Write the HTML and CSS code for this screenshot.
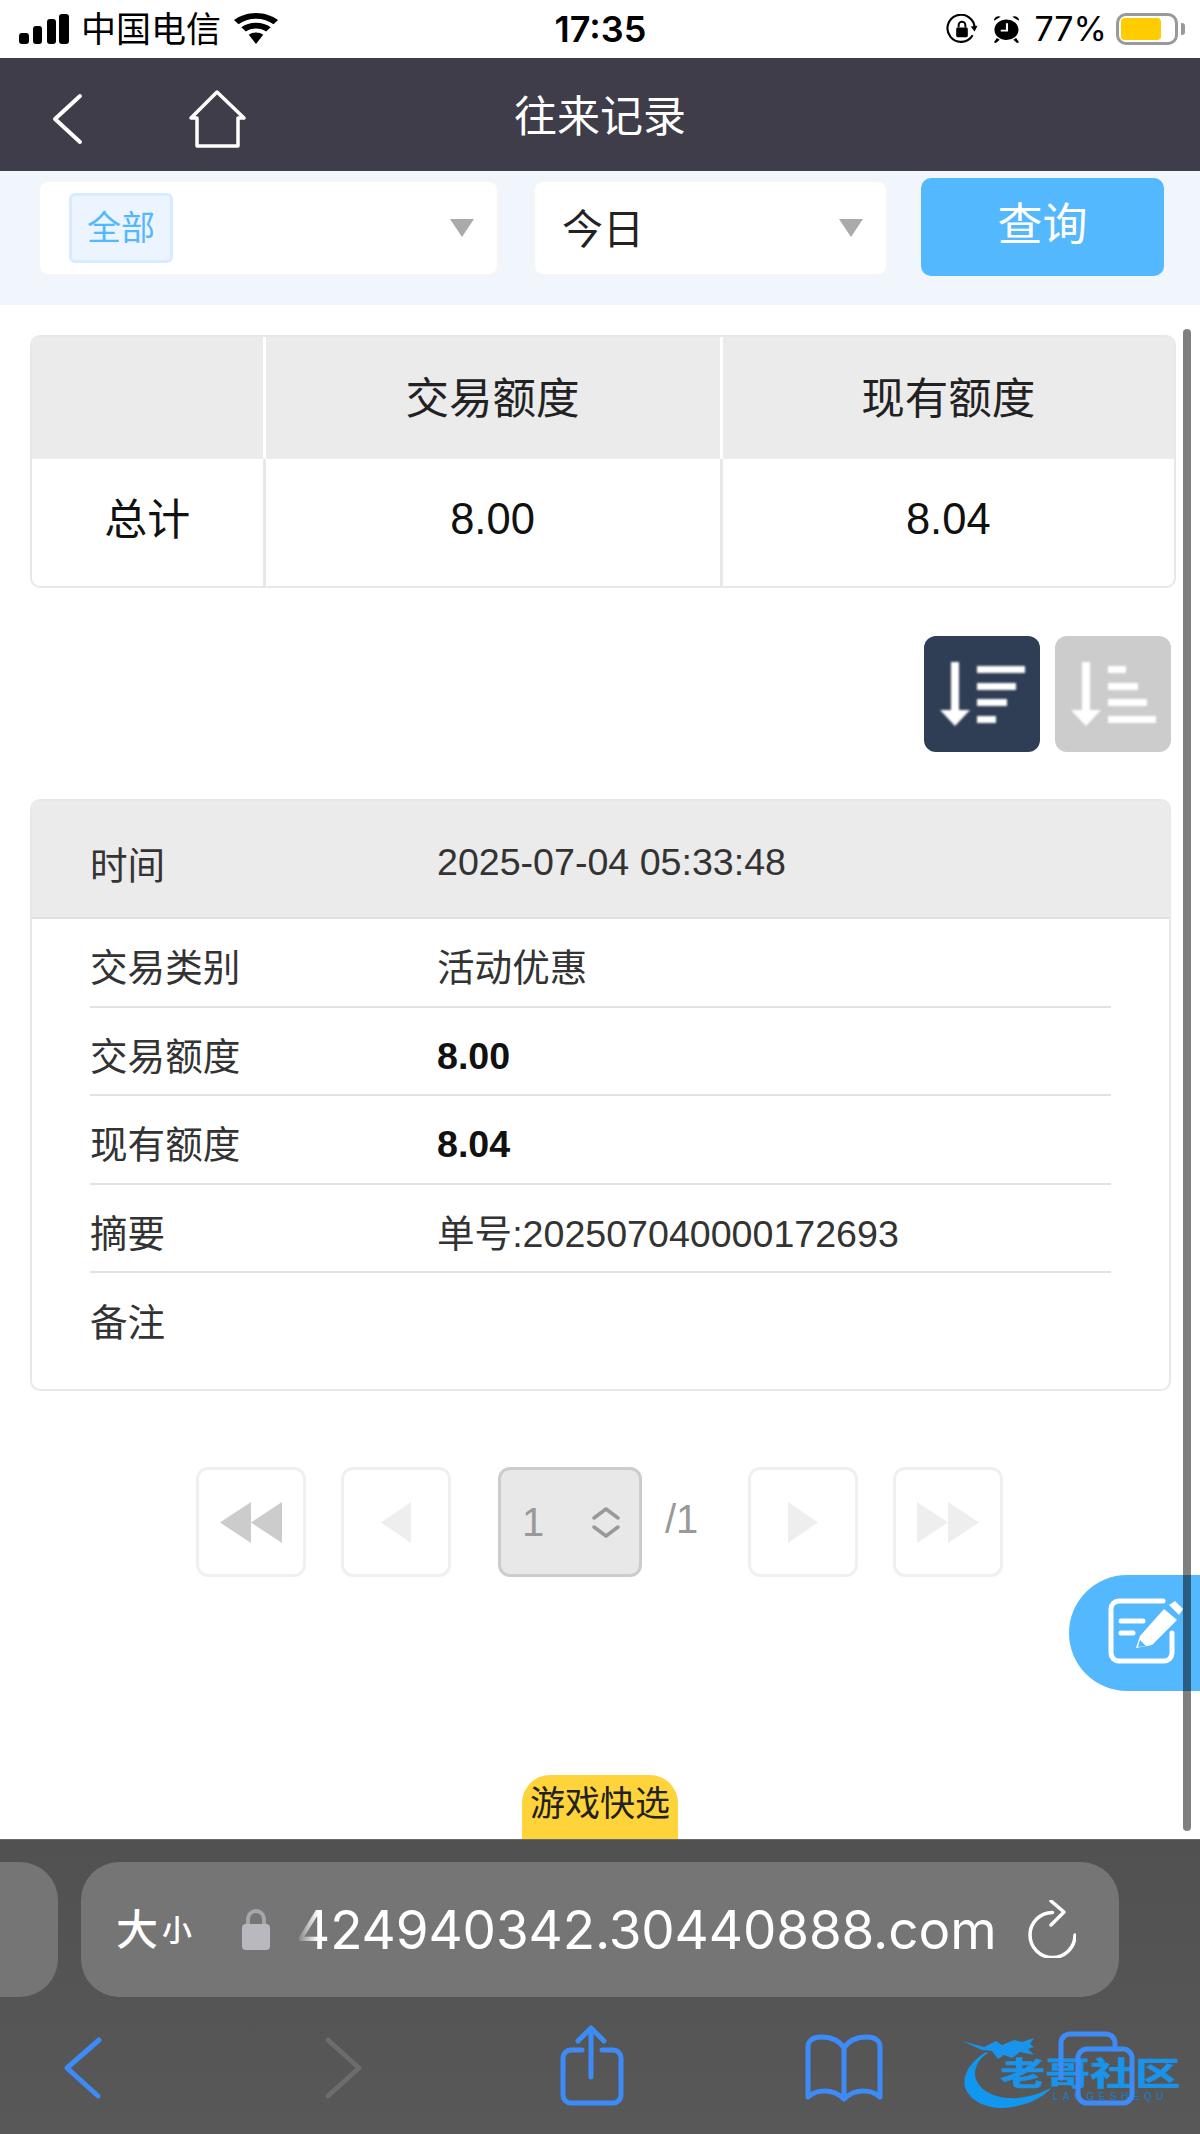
FILE: index.html
```html
<!DOCTYPE html>
<html lang="zh-CN">
<head>
<meta charset="utf-8">
<title>往来记录</title>
<link rel="stylesheet" href="styles.css">
</head>
<body>
<div class="page">
	<div class="statusBar">
		<div class="statusLeft">
			<svg class="signal" width="50" height="30" viewBox="0 0 50 30"><rect x="0" y="19" width="10" height="11" rx="3"/><rect x="14" y="12" width="9" height="18" rx="3"/><rect x="28" y="5" width="9" height="25" rx="3"/><rect x="40" y="0" width="10" height="30" rx="3"/></svg>
			<span class="carrier">中国电信</span>
			<svg class="wifi" width="44" height="31" viewBox="0 0 44 38" preserveAspectRatio="none"><path d="M22 0C13.500 0 6 3.400 0 8.500l4.500 5.200C9.300 9.500 15.300 7 22 7s12.700 2.500 17.500 6.700L44 8.500C38 3.400 30.500 0 22 0z"/><path d="M22 12c-5.700 0-10.700 2.100-14.700 5.500l4.600 5.300c2.700-2.300 6.200-3.800 10.100-3.800s7.400 1.500 10.100 3.800l4.600-5.300C32.700 14.100 27.700 12 22 12z"/><path d="M22 24c-2.800 0-5.200 1-7.200 2.600L22 38l7.200-11.400C27.200 25 24.800 24 22 24z"/></svg>
		</div>
		<div class="statusTime">17:35</div>
		<div class="statusRight">
			<svg class="rotLock" width="34" height="31" viewBox="0 0 32 32"><path d="M27 22a14 14 0 1 1 2-7" fill="none" stroke="#000" stroke-width="2.200"/><path d="M32 12l-3 6-4-5z"/><rect x="10" y="14" width="12" height="10" rx="1.500"/><path d="M12.500 14v-2.500a3.500 3.500 0 0 1 7 0V14" fill="none" stroke="#000" stroke-width="2"/></svg>
			<svg class="alarm" width="27" height="28" viewBox="0 0 28 34" preserveAspectRatio="none"><circle cx="14" cy="18" r="12.500"/><path d="M1 7a5 5 0 0 1 7-5zM27 7a5 5 0 0 0-7-5zM4 28l-3 5 2 1 4-4zM24 28l3 5-2 1-4-4z"/><path d="M14.500 10v9H8" fill="none" stroke="#fff" stroke-width="2.200"/></svg>
			<span class="percent">77%</span>
			<div class="battery"><div class="batteryFill"></div></div>
			<div class="batteryNub"></div>
		</div>
	</div>

	<div class="head">
		<div class="headLeft">
			<svg class="headBack" width="36" height="52" viewBox="0 0 36 52"><path d="M30 3L5 26l25 23" fill="none" stroke="#fff" stroke-width="4" stroke-linecap="round" stroke-linejoin="round"/></svg>
			<svg class="headHome" width="62" height="60" viewBox="0 0 62 60"><path d="M4 29L30 3l27 26h-6v28H10V29z" fill="none" stroke="#fff" stroke-width="3.500" stroke-linejoin="round"/></svg>
		</div>
		<div class="headTitle">往来记录</div>
		<div></div>
	</div>

	<div class="filter">
		<div class="selectBox selectType">
			<span class="tag">全部</span>
			<i class="caret"></i>
		</div>
		<div class="selectBox selectDate">
			<span class="selectText">今日</span>
			<i class="caret"></i>
		</div>
		<div class="searchBtn">查询</div>
	</div>

	<div class="main">
		<div class="total">
			<table>
				<tr>
					<th class="colName"></th>
					<th class="colMid">交易额度</th>
					<th>现有额度</th>
				</tr>
				<tr>
					<td class="colName totalName">总计</td>
					<td class="colMid">8.00</td>
					<td>8.04</td>
				</tr>
			</table>
		</div>

		<div class="sortBar">
			<div class="sortBtn sortOn">
				<svg width="116" height="116" viewBox="0 0 116 116"><path d="M27 26h8v48h11L31 90 16 74h11z"/><rect x="53" y="30" width="48" height="7"/><rect x="53" y="47" width="39" height="7"/><rect x="53" y="63" width="30" height="7"/><rect x="53" y="80" width="19" height="7"/></svg>
			</div>
			<div class="sortBtn sortOff">
				<svg width="116" height="116" viewBox="0 0 116 116"><path d="M27 26h8v48h11L31 90 16 74h11z"/><rect x="53" y="30" width="18" height="7"/><rect x="53" y="47" width="30" height="7"/><rect x="53" y="63" width="39" height="7"/><rect x="53" y="80" width="48" height="7"/></svg>
			</div>
		</div>

		<div class="record">
			<div class="recordHead">
				<span class="rowName">时间</span>
				<span class="rowVal">2025-07-04 05:33:48</span>
			</div>
			<div class="recordBody">
				<div class="row"><span class="rowName">交易类别</span><span class="rowVal">活动优惠</span></div>
				<div class="row"><span class="rowName">交易额度</span><span class="rowVal rowBold">8.00</span></div>
				<div class="row"><span class="rowName">现有额度</span><span class="rowVal rowBold">8.04</span></div>
				<div class="row"><span class="rowName">摘要</span><span class="rowVal">单号:202507040000172693</span></div>
				<div class="row rowLast"><span class="rowName">备注</span><span class="rowVal"></span></div>
			</div>
		</div>

		<div class="pager">
			<div class="pageBtn">
				<svg width="62" height="41" viewBox="0 0 62 41"><path d="M31 0v41L0 20.500zM62 0v41L31 20.500z" fill="#ccc"/></svg>
			</div>
			<div class="pageBtn pagePrev">
				<svg width="30" height="41" viewBox="0 0 30 41"><path d="M30 0v41L0 20.500z" fill="#eee"/></svg>
			</div>
			<div class="pageSelect">
				<span>1</span>
				<svg width="28" height="31" viewBox="0 0 28 31"><path d="M2 11L14 2l12 9M2 20l12 9 12-9" fill="none" stroke="#999" stroke-width="3.500" stroke-linecap="round" stroke-linejoin="round"/></svg>
			</div>
			<div class="pageTotal">/1</div>
			<div class="pageBtn pageNext">
				<svg width="30" height="41" viewBox="0 0 30 41"><path d="M0 0v41l30-20.500z" fill="#eee"/></svg>
			</div>
			<div class="pageBtn">
				<svg width="62" height="41" viewBox="0 0 62 41"><path d="M0 0v41l31-20.500zM31 0v41l31-20.500z" fill="#eee"/></svg>
			</div>
		</div>

		<div class="quickTab">游戏快选</div>
		<div class="floatBtn">
			<svg width="80" height="80" viewBox="0 0 80 80">
				<path d="M58 8H14a8 8 0 0 0-8 8v44a8 8 0 0 0 8 8h45a8 8 0 0 0 8-8V40" fill="none" stroke="#fff" stroke-width="5" stroke-linecap="round"/>
				<path d="M16 28h22M16 40h12" fill="none" stroke="#fff" stroke-width="5" stroke-linecap="round"/>
				<path d="M35 43L59 16l13 11-25 25-16 3z" fill="#fff"/>
				<path d="M64 12l6-4 8 8-4 6z" fill="#fff"/>
				<path d="M35 47l6 6-8 1z" fill="#54b8ff"/>
			</svg>
		</div>
	</div>

	<div class="chrome">
		<div class="urlRow">
			<div class="tabStub"></div>
			<div class="urlBar">
				<span class="fontSize"><b>大</b><small>小</small></span>
				<svg class="urlLock" width="28" height="41" viewBox="0 0 28 41"><path d="M6 16v-6a8 8 0 0 1 16 0v6" fill="none" stroke="#a5a5ab" stroke-width="4"/><rect x="0" y="15" width="28" height="26" rx="4" fill="#b8b8be"/></svg>
				<span class="urlText">424940342.30440888.com</span>
				<svg class="urlReload" width="48" height="58" viewBox="0 0 48 58"><path d="M47 35A22.500 22.500 0 1 1 24.500 12.500" fill="none" stroke="#fff" stroke-width="3.500" stroke-linecap="round"/><path d="M23 1l13 11-13 13" fill="none" stroke="#fff" stroke-width="3.500" stroke-linecap="round" stroke-linejoin="round"/></svg>
			</div>
		</div>
		<div class="toolBar">
			<svg width="100" height="100" viewBox="0 0 100 100"><path d="M59 18L27 46l31 28" class="toolLine"/></svg>
			<svg width="100" height="100" viewBox="0 0 100 100"><path d="M35 18l31 28-31 28" class="toolLine toolOff"/></svg>
			<svg width="100" height="100" viewBox="0 0 100 100"><path d="M36 28H25a8 8 0 0 0-8 8v37a8 8 0 0 0 8 8h42a8 8 0 0 0 8-8V36a8 8 0 0 0-8-8H56M45 55V6M32 19L45 6l13 13" class="toolLine"/></svg>
			<svg width="100" height="100" viewBox="0 0 100 100"><path d="M45 26c-5-8-13-11-23-11-8 0-13 4-13 10v50c4-4 10-6 17-6 8 0 14 3 19 8 5-5 11-8 19-8 7 0 13 2 17 6V25c0-6-5-10-13-10-10 0-18 3-23 11zM45 26v48" class="toolLine"/></svg>
			<svg class="toolTabs" width="100" height="100" viewBox="0 0 100 100"><path d="M9 56V21a9 9 0 0 1 9-9h36a9 9 0 0 1 9 9v6" class="toolLine"/><rect x="26" y="27" width="54" height="54" rx="9" class="toolLine"/></svg>
			<div class="watermark">
				<svg class="mark" width="100" height="74" viewBox="0 0 100 74"><path d="M24 15C8 25 0 38 3 50c5 16 27 24 47 20 18-3 32-10 40-20-12 7-27 12-44 11C26 60 12 48 13 35c1-8 6-15 13-19z" fill="#1297ee"/><path d="M0 4l22 6 12-6 6 4 12-5 8 2 12-4-4 6 4 3-6 2 6 6-14-3-8 6-8-3-6 4-6-8-10-1z" fill="#1a93ea"/></svg>
				<span class="markName">老哥社区</span>
				<span class="markSub">LAOGESHEQU</span>
			</div>
		</div>
	</div>

	<div class="scrollBar"></div>
</div>
</body>
</html>
```

FILE: styles.css
```css
*{ padding:0; margin:0; box-sizing:border-box; }
body{ font-family:"Liberation Sans","Noto Sans CJK SC",sans-serif; background:#fff; color:#222; }
.page{ position:relative; width:1200px; height:2134px; display:flex; flex-direction:column; overflow:hidden; }

/* status bar */
.statusBar{ height:58px; display:grid; grid-template-columns:1fr auto 1fr; align-items:center; padding:0 15px 0 19px; background:#fff; color:#000; font-family:"Inter","Noto Sans CJK SC",sans-serif; }
.statusLeft{ display:flex; align-items:center; }
.carrier{ font-size:35px; line-height:58px; margin-left:12px; }
.wifi{ margin-left:13px; margin-top:-1px; }
.statusTime{ font-size:36px; font-weight:600; line-height:58px; margin-left:-3px; }
.statusRight{ display:flex; align-items:center; justify-content:flex-end; }
.rotLock{ margin-right:14px; }
.alarm{ margin-right:14px; }
.percent{ font-size:34px; line-height:58px; margin-right:9px; }
.battery{ width:62px; height:32px; border:3px solid #999; border-radius:10px; padding:2px; }
.batteryFill{ width:40px; height:22px; background:#fc0; border-radius:4px; }
.batteryNub{ width:4px; height:12px; margin-left:3px; background:#999; border-radius:0 3px 3px 0; }

/* page head */
.head{ height:113px; background:#3e3d49; display:grid; grid-template-columns:1fr auto 1fr; align-items:center; color:#fff; }
.headLeft{ display:flex; align-items:center; padding-left:50px; }
.headBack{ margin-top:5px; }
.headHome{ margin:6px 0 0 101px; }
.headTitle{ font-size:43px; line-height:113px; padding-top:3px; }

/* filter */
.filter{ height:134px; background:#f1f6fd; display:flex; align-items:flex-start; padding:7px 0 0 38px; }
.selectBox{ height:96px; margin-top:2px; background:#fff; border:2px solid #f5f5f5; border-radius:10px; display:flex; align-items:center; justify-content:space-between; padding-right:23px; }
.selectType{ width:461px; padding-left:29px; }
.selectDate{ width:355px; margin-left:34px; padding-left:27px; }
.tag{ width:104px; height:70px; line-height:65px; text-align:center; font-size:34px; color:#54b8ff; background:#ecf4ff; border:3px solid #d9ebff; border-radius:6px; }
.selectText{ font-size:41px; padding-bottom:5px; }
.caret{ width:0; height:0; border-left:12px solid transparent; border-right:12px solid transparent; border-top:18px solid #aaa; }
.searchBtn{ width:243px; height:98px; margin-left:33px; background:#54b8ff; border-radius:10px; color:#fff; font-size:45px; line-height:96px; text-align:center; }

/* main */
.main{ position:relative; flex:1; padding-top:30px; background:#fff; }
.total{ width:1146px; height:253px; margin-left:30px; border:2px solid #e8e8e8; border-radius:10px; overflow:hidden; }
.total table{ width:100%; height:100%; border-collapse:collapse; table-layout:fixed; }
.total th{ height:122px; padding-bottom:6px; background:#ebebeb; font-weight:normal; font-size:43.500px; }
.total td{ padding-bottom:6px; text-align:center; font-size:43.500px; color:#111; }
.colName{ width:232px; border-right:3px solid #e8e8e8; }
.colMid{ width:457px; border-right:3px solid #e8e8e8; }
.total th.colName,.total th.colMid{ border-right-color:#fff; }
.total td.totalName{ font-size:43px; padding-bottom:14px; }

.sortBar{ display:flex; justify-content:flex-end; gap:15px; margin-top:48px; padding-right:29px; }
.sortBtn{ width:116px; height:116px; border-radius:12px; }
.sortBtn svg{ display:block; fill:#fff; filter:blur(.8px); }
.sortOn{ background:#2f3e55; }
.sortOff{ background:#ccc; }

.record{ width:1141px; height:592px; margin:47px 0 0 30px; border:2px solid #e8e8e8; border-radius:10px; overflow:hidden; }
.recordHead{ height:118px; background:#ebebeb; border-bottom:2px solid #e0e0e0; display:flex; align-items:center; padding:6px 0 0 58px; }
.recordBody{ padding:0 58px 0 58px; }
.row{ height:88.500px; display:flex; align-items:center; padding-top:5px; border-bottom:2px solid #e2e2e2; }
.rowLast{ border-bottom:0; }
.rowName{ width:347px; font-size:37.600px; color:#333; }
.rowVal{ font-size:37.600px; color:#333; }
.rowBold{ font-weight:bold; color:#111; padding-top:6px; }

.pager{ display:flex; align-items:flex-start; margin-top:76px; padding-left:196px; }
.pageBtn{ width:110px; height:110px; border:3px solid #f0f0f0; border-radius:12px; display:flex; align-items:center; justify-content:center; }
.pageBtn svg{ filter:blur(.6px); }
.pageBtn + .pageBtn{ margin-left:35px; }
.pageSelect{ width:144px; height:110px; margin-left:47px; background:#e8e8e8; border:3px solid #ccc; border-radius:12px; display:flex; align-items:center; justify-content:space-between; padding:0 19px 0 21px; font-size:40px; color:#999; }
.pageTotal{ width:106px; padding:32px 0 0 23px; font-size:40px; line-height:40px; color:#999; }
.pageBtn.pageNext{ margin-left:0; }
.pagePrev{ padding-left:0; }

.quickTab{ position:absolute; left:522px; bottom:0; width:156px; height:64px; background:#ffd43a; border-radius:28px 28px 0 0; font-size:35px; line-height:58px; text-align:center; color:#222; }
.floatBtn{ position:absolute; right:0; top:1270px; width:131px; height:116px; background:#54b8ff; border-radius:58px 0 0 58px; padding:18px 0 0 36px; }
.floatBtn svg{ display:block; }

/* browser chrome */
.chrome{ height:295px; background:linear-gradient(180deg,#515151,#585858); border-top:1px solid #6a6a6a; }
.urlRow{ display:flex; gap:23px; padding-top:22px; height:182px; }
.tabStub{ width:58px; height:135px; background:#757575; border-radius:0 38px 38px 0; }
.urlBar{ width:1038px; height:135px; background:#757575; border-radius:38px; display:flex; align-items:center; padding:0 43px 0 35px; color:#fff; font-family:"Inter","Noto Sans CJK SC",sans-serif; }
.fontSize{ width:126px; display:flex; align-items:flex-end; font-size:42px; line-height:46px; }
.fontSize b{ font-weight:500; }
.fontSize small{ font-size:30px; font-weight:500; margin-left:4px; }
.urlText{ margin-left:26px; font-size:53px; letter-spacing:-.1px; color:#fff; white-space:nowrap; -webkit-mask-image:linear-gradient(90deg,transparent,#000 22px); mask-image:linear-gradient(90deg,transparent,#000 22px); }
.urlReload{ margin-left:auto; margin-top:-1px; }

.toolBar{ position:relative; display:flex; gap:153px; padding-left:40px; }
.toolBar svg{ display:block; flex:none; }
.toolLine{ fill:none; stroke:#3d8bf7; stroke-width:5; stroke-linecap:round; stroke-linejoin:round; }
.toolOff{ stroke:#6c6c6c; }
.toolTabs{ position:relative; z-index:1; }

.watermark{ position:absolute; left:962px; top:0; width:225px; height:90px; }
.toolBar .mark{ position:absolute; left:0; top:15px; }
.markName{ position:absolute; left:38px; top:36px; font-size:45px; line-height:45px; font-weight:bold; color:#1a93ea; white-space:nowrap; transform:scaleY(.7); transform-origin:top; -webkit-text-stroke:1px #1a93ea; }
.markSub{ position:absolute; left:91px; top:69px; font-size:10px; line-height:12px; letter-spacing:4.500px; color:#1a7cc8; white-space:nowrap; }

.scrollBar{ position:absolute; left:1183px; top:329px; width:8px; height:1502px; background:rgba(0,0,0,.5); border-radius:4px; }
```
